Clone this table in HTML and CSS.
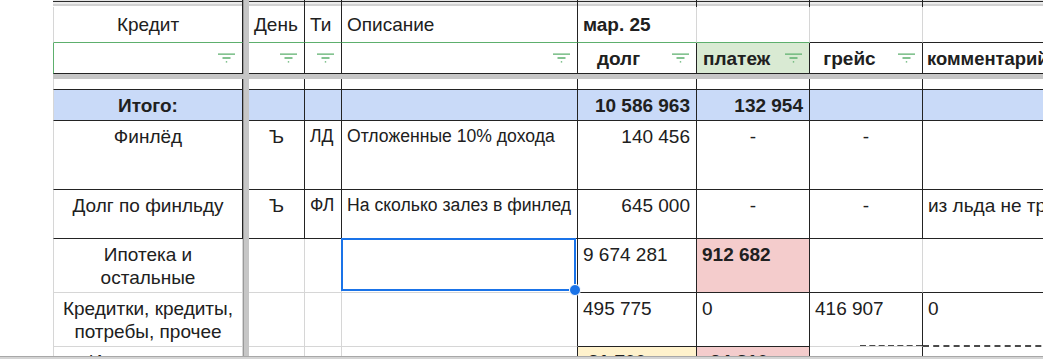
FILE: index.html
```html
<!DOCTYPE html>
<html lang="ru">
<head>
<meta charset="utf-8">
<title>Кредиты</title>
<link rel="stylesheet" href="styles.css">
</head>
<body>
<div class="sheet">
  <div class="viewport">
    <div class="grid">
      <div class="freeze-col"></div>
      <div class="freeze-row"></div>

      <!-- top strip -->
      <div class="strip"></div>
      <div class="strip"></div>
      <div class="strip"></div>
      <div class="strip"></div>
      <div class="strip"></div>
      <div class="strip"></div>
      <div class="strip"></div>
      <div class="strip no-r"></div>

      <!-- header row 1 -->
      <div class="cell head first b-green center">Кредит</div>
      <div class="cell head b-green">День</div>
      <div class="cell head b-green">Ти</div>
      <div class="cell head b-green">Описание</div>
      <div class="cell head b-green r-light bold">мар. 25</div>
      <div class="cell head b-green r-light"></div>
      <div class="cell head r-light"></div>
      <div class="cell head no-r"></div>

      <!-- header row 2 (filters) -->
      <div class="cell filt first-green"><span class="lbl"></span><svg class="ficon" viewBox="0 0 17 10"><path d="M0 1.2H17M4.5 5H12.5M7.8 8.8H9.2"/></svg></div>
      <div class="cell filt"><span class="lbl"></span><svg class="ficon" viewBox="0 0 17 10"><path d="M0 1.2H17M4.5 5H12.5M7.8 8.8H9.2"/></svg></div>
      <div class="cell filt"><span class="lbl"></span><svg class="ficon" viewBox="0 0 17 10"><path d="M0 1.2H17M4.5 5H12.5M7.8 8.8H9.2"/></svg></div>
      <div class="cell filt"><span class="lbl"></span><svg class="ficon" viewBox="0 0 17 10"><path d="M0 1.2H17M4.5 5H12.5M7.8 8.8H9.2"/></svg></div>
      <div class="cell filt"><span class="lbl center shift-more bold">долг</span><svg class="ficon" viewBox="0 0 17 10"><path d="M0 1.2H17M4.5 5H12.5M7.8 8.8H9.2"/></svg></div>
      <div class="cell filt mint"><span class="lbl bold pad-l">платеж</span><svg class="ficon" viewBox="0 0 17 10"><path d="M0 1.2H17M4.5 5H12.5M7.8 8.8H9.2"/></svg></div>
      <div class="cell filt"><span class="lbl center bold">грейс</span><svg class="ficon" viewBox="0 0 17 10"><path d="M0 1.2H17M4.5 5H12.5M7.8 8.8H9.2"/></svg></div>
      <div class="cell filt no-r"><span class="lbl bold comment-head">комментарий</span></div>

      <!-- short row under freeze -->
      <div class="cell first"></div>
      <div class="cell"></div>
      <div class="cell"></div>
      <div class="cell"></div>
      <div class="cell"></div>
      <div class="cell"></div>
      <div class="cell"></div>
      <div class="cell no-r"></div>

      <!-- total row -->
      <div class="cell mid first blue bold center">Итого:</div>
      <div class="cell mid blue"></div>
      <div class="cell mid blue"></div>
      <div class="cell mid blue"></div>
      <div class="cell mid blue bold num">10 586 963</div>
      <div class="cell mid blue bold num">132 954</div>
      <div class="cell mid blue"></div>
      <div class="cell mid blue no-r"></div>

      <!-- Финлёд -->
      <div class="cell first center">Финлёд</div>
      <div class="cell center">Ъ</div>
      <div class="cell small">ЛД</div>
      <div class="cell small">Отложенные 10% дохода</div>
      <div class="cell num">140 456</div>
      <div class="cell center">-</div>
      <div class="cell center">-</div>
      <div class="cell no-r"></div>

      <!-- Долг по финльду -->
      <div class="cell first center">Долг по финльду</div>
      <div class="cell center">Ъ</div>
      <div class="cell small">ФЛ</div>
      <div class="cell small">На сколько залез в финлед</div>
      <div class="cell num">645 000</div>
      <div class="cell center">-</div>
      <div class="cell center">-</div>
      <div class="cell no-r">из льда не трачу</div>

      <!-- Ипотека -->
      <div class="cell first center wrap r-light b-light">Ипотека и<br>остальные</div>
      <div class="cell r-light b-light"></div>
      <div class="cell r-light b-light"></div>
      <div class="cell b-light selected"><span class="sel"><span class="handle"></span></span></div>
      <div class="cell">9 674 281</div>
      <div class="cell pink bold">912 682</div>
      <div class="cell r-light"></div>
      <div class="cell no-r"></div>

      <!-- Кредитки -->
      <div class="cell first center wrap r-light b-light">Кредитки, кредиты,<br>потребы, прочее</div>
      <div class="cell r-light b-light"></div>
      <div class="cell r-light b-light"></div>
      <div class="cell b-light"></div>
      <div class="cell">495 775</div>
      <div class="cell">0</div>
      <div class="cell b-light dashed-tail">416 907</div>
      <div class="cell no-r b-dashed">0</div>

      <!-- next row (cut off) -->
      <div class="cell first center r-light b-light low">Итого мелкие</div>
      <div class="cell r-light b-light"></div>
      <div class="cell r-light b-light"></div>
      <div class="cell b-light"></div>
      <div class="cell yellow bold low pad-more">31 700</div>
      <div class="cell pink bold low pad-most">24 810</div>
      <div class="cell"></div>
      <div class="cell no-r"></div>
    </div>
  </div>
  <div class="bottom-bar"></div>
</div>
</body>
</html>
```

FILE: styles.css
```css
:root {
  --dk: #232323;
  --lt: #d6d6d6;
  --gr: #5daf6d;
  --freeze: #c6c6c6;
}

html, body {
  margin: 0;
  padding: 0;
  background: #fff;
}

body {
  font-family: "Liberation Sans", Arial, sans-serif;
  font-size: 19px;
  line-height: 23px;
  color: #202020;
  overflow: hidden;
}

.sheet {
  width: 1043px;
  height: 359px;
  display: flex;
  flex-direction: column;
  overflow: hidden;
}

.viewport {
  flex: none;
  height: 356px;
  overflow: hidden;
}

.bottom-bar {
  flex: none;
  height: 3px;
  box-sizing: border-box;
  border-top: 1px solid #a8a8a8;
  background: #d4d4d4;
}

.grid {
  display: grid;
  margin-left: 53px;
  grid-template-columns: 190px 6px 56px 37px 236px 119px 113px 113px 200px;
  grid-template-rows: 7px 36px 31px 5px 11px 31px 69px 49px 54px 54px 40px;
}

.freeze-col {
  grid-column: 2;
  grid-row: 1 / -1;
  background: var(--freeze);
  border-left: 1px solid #9a9a9a;
}

.freeze-row {
  grid-column: 1 / -1;
  grid-row: 4;
  background: var(--freeze);
}

.strip {
  border-right: 1px solid var(--dk);
  background: linear-gradient(to bottom,
    #e4e4e4 0, #e4e4e4 1px,
    #2c2c2c 1px, #2c2c2c 2px,
    #ececec 2px, #ececec 4px,
    #d2d2d2 4px, #d2d2d2 6px,
    #fff 6px);
}

.cell {
  box-sizing: border-box;
  border-right: 1px solid var(--dk);
  border-bottom: 1px solid var(--dk);
  padding: 4px 5px 0 5px;
  overflow: hidden;
  white-space: nowrap;
  min-width: 0;
}

.first { border-left: 1px solid var(--lt); }
.first-green { border-left: 1px solid var(--gr); }

.no-r { border-right-color: transparent; }
.r-light { border-right-color: var(--lt); }
.b-light { border-bottom-color: var(--lt); }
.b-green { border-bottom-color: var(--gr); }

.head {
  display: flex;
  align-items: center;
  padding-top: 0;
}
.head.center { justify-content: center; }

.filt {
  display: flex;
  align-items: center;
  padding: 0 7px 0 4px;
}

.lbl {
  flex: 1;
  min-width: 0;
  overflow: hidden;
}
.lbl.center { text-align: center; padding-right: 13px; }
.lbl.shift-more { padding-right: 17px; }
.pad-l { padding-left: 2px; }
.comment-head { font-size: 18.4px; padding-left: 0; }

.ficon {
  flex: none;
  width: 17px;
  height: 10px;
  fill: none;
  stroke: #5cb06d;
  stroke-width: 1.3;
}

.mid {
  display: flex;
  align-items: center;
  padding-top: 0;
}
.mid.center { justify-content: center; }
.mid.num { justify-content: flex-end; }

.center { text-align: center; }
.num { text-align: right; padding-right: 6px; }
.bold { font-weight: bold; }
.wrap { white-space: normal; }
.small { font-size: 17.6px; }
.low { padding-top: 3px; }
.pad-more { padding-left: 10px; }
.pad-most { padding-left: 13px; }

.blue { background: #c9daf8; }
.pink { background: #f4cccc; }
.yellow { background: #fff2cc; }
.mint { background: #d9ead3; }

.selected {
  position: relative;
  overflow: visible;
}

.sel {
  position: absolute;
  left: -1px;
  top: -1px;
  right: 1px;
  bottom: 1px;
  border: 2px solid #1a73e8;
  z-index: 2;
}

.handle {
  position: absolute;
  right: -7px;
  bottom: -7px;
  width: 10px;
  height: 10px;
  border-radius: 50%;
  background: #1a73e8;
  border: 1px solid #fff;
}

.b-dashed {
  border-bottom: 2px dashed #4a4a4a;
}

.dashed-tail {
  position: relative;
}
.dashed-tail::after {
  content: "";
  position: absolute;
  left: 50px;
  right: 0;
  bottom: -1px;
  border-bottom: 2px dashed #4a4a4a;
}
```
